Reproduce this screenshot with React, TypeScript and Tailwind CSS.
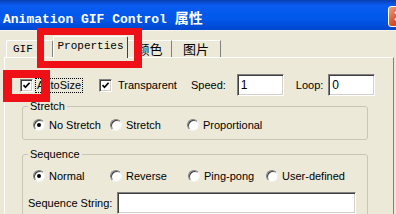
import React from "react";

const ui = { fontFamily: '"Liberation Sans", Arial, sans-serif' };
const mono = { fontFamily: '"Liberation Mono", "Courier New", monospace' };
const cjk = { fontFamily: '"Noto Sans CJK SC", "Noto Sans CJK JP", sans-serif' };

function Checkbox({ checked }: { checked?: boolean }) {
  return (
    <span className="w-[13px] h-[13px] bg-white border border-t-[#808080] border-l-[#808080] border-r-white border-b-white shadow-[inset_1px_1px_0_#404040,inset_-1px_-1px_0_#D4D0C8] flex items-center justify-center shrink-0">
      {checked && (
        <svg width="9" height="9" viewBox="0 0 9 9">
          <path d="M1.5 4.2 L3.5 6.3 L7.6 1.8" fill="none" stroke="#000" strokeWidth="1.7" />
        </svg>
      )}
    </span>
  );
}

function Radio({ checked, label, w }: { checked?: boolean; label: string; w?: string }) {
  return (
    <div className={`flex items-center h-[14px] ${w ?? ""}`}>
      <span className="w-[12px] h-[12px] rounded-full bg-white border border-t-[#808080] border-l-[#808080] border-r-[#F4F3EE] border-b-[#F4F3EE] shadow-[inset_1px_1px_0_#404040] flex items-center justify-center shrink-0">
        {checked && <span className="w-[4px] h-[4px] rounded-full bg-black" />}
      </span>
      <span className="ml-[4px] text-[11px] text-black leading-none">{label}</span>
    </div>
  );
}

function Field({ value, w }: { value?: string; w: string }) {
  return (
    <div className={`${w} h-[22px] bg-white border border-t-[#808080] border-l-[#808080] border-r-white border-b-white shadow-[inset_1px_1px_0_#404040,inset_-1px_-1px_0_#D4D0C8] pl-[3px] text-[12px] leading-[20px] text-black`}>
      {value}
    </div>
  );
}

export default function App() {
  return (
    <div className="relative w-[396px] h-[214px] overflow-hidden bg-[#ECE9D8]" style={ui}>
      {/* Title bar */}
      <div className="h-[30px] flex items-center pl-[3px] pt-[6px] bg-[linear-gradient(180deg,#0A3FB4_0%,#0A5CF0_18%,#0057EA_65%,#0046CC_100%)]">
        <span className="text-white font-bold text-[13px] leading-none whitespace-nowrap" style={mono}>
          Animation GIF Control <span className="text-[14px]" style={cjk}>属性</span>
        </span>
        <span className="ml-auto mr-[-14px] mt-[-4px] w-[22px] h-[21px] rounded-[3px] border border-white bg-[linear-gradient(135deg,#F0A080,#D8502A_50%,#C03A18)] flex items-center justify-center">
          <svg width="12" height="12" viewBox="0 0 12 12">
            <path d="M2 2 L10 10 M10 2 L2 10" stroke="#fff" strokeWidth="2" />
          </svg>
        </span>
      </div>

      {/* Tabs */}
      <div className="h-[27px] flex items-end pl-[6px] border-t border-[#F4F3EE]">
        <div className="w-[47px] h-[17px] border-t border-l border-white border-r border-r-[#808080] rounded-t-[2px] flex items-center pl-[6px] text-[11px] text-black" style={mono}>
          GIF
        </div>
        <div className="relative z-10 w-[75px] h-[22px] mb-[-1px] bg-[#ECE9D8] border-t border-l border-white border-r border-r-[#404040] rounded-t-[2px] flex items-center justify-center pb-[2px] text-[11px] text-black" style={mono}>
          Properties
        </div>
        <div className="w-[44px] h-[17px] border-t border-white border-r border-r-[#808080] flex items-center justify-center text-[13px] text-black" style={cjk}>
          颜色
        </div>
        <div className="w-[49px] h-[17px] border-t border-white border-r border-r-[#808080] flex items-center justify-center text-[13px] text-black" style={cjk}>
          图片
        </div>
      </div>

      {/* Tab page */}
      <div className="ml-[4px] w-[390px] h-[160px] border-t border-l border-white border-r border-r-[#808080]">
        <div className="mt-[16px] h-[22px] flex items-center pl-[15px] text-[11px] text-black">
          <Checkbox checked />
          <span className="ml-[3px] px-[1px] outline-1 outline-dotted outline-black leading-[13px]">AutoSize</span>
          <span className="ml-[17px]"><Checkbox checked /></span>
          <span className="ml-[6px]">Transparent</span>
          <span className="ml-[14px]">Speed:</span>
          <span className="ml-[11px]"><Field value="1" w="w-[47px]" /></span>
          <span className="ml-[12px]">Loop:</span>
          <span className="ml-[5px]"><Field value="0" w="w-[47px]" /></span>
        </div>

        <fieldset className="ml-[17px] mt-[4px] w-[346px] border border-[#C8C6B6] rounded-[3px] pb-[7px]">
          <legend className="ml-[5px] px-[2px] text-[11px] leading-[13px] text-black">Stretch</legend>
          <div className="mt-[5px] pl-[10px] flex">
            <Radio checked label="No Stretch" w="w-[77px]" />
            <Radio label="Stretch" w="w-[77px]" />
            <Radio label="Proportional" />
          </div>
        </fieldset>

        <fieldset className="ml-[17px] mt-[8px] w-[346px] border border-[#C8C6B6] rounded-[3px] pb-[10px]">
          <legend className="ml-[5px] px-[2px] text-[11px] leading-[13px] text-black">Sequence</legend>
          <div className="mt-[8px] pl-[10px] flex">
            <Radio checked label="Normal" w="w-[77px]" />
            <Radio label="Reverse" w="w-[78px]" />
            <Radio label="Ping-pong" w="w-[78px]" />
            <Radio label="User-defined" />
          </div>
          <div className="mt-[9px] pl-[5px] flex items-center text-[11px] text-black">
            <span className="w-[89px]">Sequence String:</span>
            <Field w="w-[239px]" />
          </div>
        </fieldset>
      </div>

      {/* Red highlight marks */}
      <div className="absolute left-[37px] top-[28px] w-[105px] h-[40px] border-[7px] border-r-[8px] border-[#EE1016]" />
      <div className="absolute left-[3px] top-[70px] w-[47px] h-[32px] border-x-[9px] border-y-[8px] border-[#EE1016]" />
    </div>
  );
}
